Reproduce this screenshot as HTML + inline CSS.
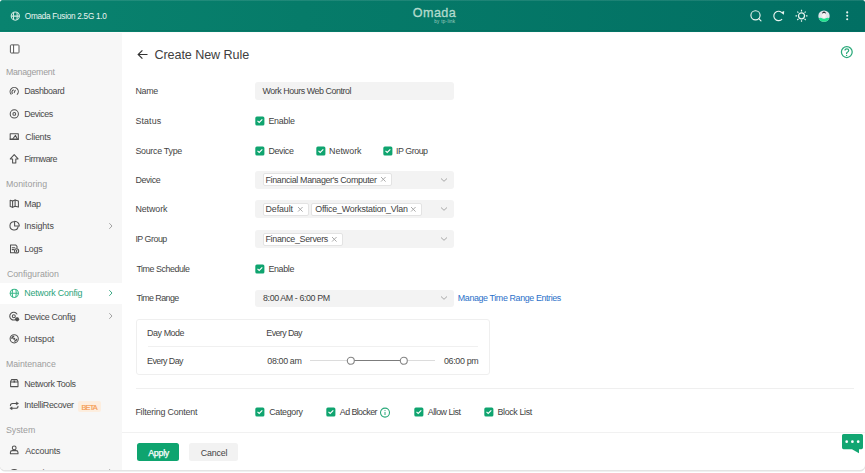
<!DOCTYPE html>
<html><head><meta charset="utf-8"><style>
html,body{margin:0;padding:0;width:865px;height:473px;overflow:hidden;background:#fff;}
body{position:relative;font-family:"Liberation Sans",sans-serif;}
.t{position:absolute;white-space:nowrap;line-height:1;}
.win{position:absolute;left:0;top:0;width:865px;height:470.3px;overflow:hidden;border-radius:2px 2px 5px 5px;box-shadow:0 1.3px 0 0.3px #e4e4e4;background:#fff}
svg{overflow:visible}
</style></head><body>
<div class="win">
<div style="position:absolute;left:0px;top:0px;width:865px;height:31.6px;background:linear-gradient(90deg,#09836f 0%,#067b69 35%,#016f63 100%);border-radius:2px 2px 0 0"></div>
<div style="position:absolute;left:0px;top:30px;width:865px;height:1px;background:rgba(0,60,50,0.12)"></div>
<div style="position:absolute;left:0px;top:0px;width:865px;height:1px;background:rgba(255,255,255,0.1)"></div>
<svg style="position:absolute;left:0px;top:0px;" width="30" height="30" viewBox="0 0 30 30"><g fill="none" stroke="#d3ebe2" stroke-width="1.05"><circle cx="15.3" cy="16.1" r="4.1"/><path d="M13.7 12.3 Q12.9 16.1 13.7 19.9 M16.9 12.3 Q17.7 16.1 16.9 19.9 M11.3 16.1 H19.3"/></g></svg>
<div class="t" style="left:24.80px;top:12.56px;font-size:8.2px;letter-spacing:-0.265px;color:#eaf5f1;">Omada Fusion 2.5G 1.0</div>
<div class="t" style="left:412.80px;top:7.23px;font-size:12.6px;letter-spacing:0.425px;color:#b3dbcd;-webkit-text-stroke:0.3px #b3dbcd">Omada</div>
<div class="t" style="left:434.30px;top:19.79px;font-size:4.5px;letter-spacing:0.311px;color:#a0d2c2;">by tp-link</div>
<svg style="position:absolute;left:748px;top:9px;" width="16" height="16" viewBox="0 0 16 16"><g fill="none" stroke="#e8f3ef" stroke-width="1.15"><circle cx="7.5" cy="6.3" r="4.6"/><line x1="10.8" y1="9.6" x2="13" y2="11.9" stroke-linecap="round"/></g></svg>
<svg style="position:absolute;left:771px;top:9px;" width="16" height="16" viewBox="0 0 16 16"><g fill="none" stroke="#e8f3ef" stroke-width="1.15"><path d="M11.1 10.02 A4.7 4.7 0 1 1 10.6 3.4"/></g><path d="M9.6 3.4 L13.2 1.9 L12.9 5.7 Z" fill="#e8f3ef"/></svg>
<svg style="position:absolute;left:794px;top:8px;" width="16" height="16" viewBox="0 0 16 16"><g fill="none" stroke="#e8f3ef" stroke-width="1.2"><circle cx="7.5" cy="7.8" r="3"/><path d="M7.5 1.8v1.6M7.5 12.2v1.6M1.5 7.8h1.6M11.9 7.8h1.6M3.3 3.6l1.1 1.1M10.6 10.9l1.1 1.1M3.3 12l1.1-1.1M10.6 4.7l1.1-1.1"/></g></svg>
<svg style="position:absolute;left:817px;top:9px;" width="14" height="14" viewBox="0 0 14 14"><defs><clipPath id="av"><circle cx="7" cy="7.1" r="5.7"/></clipPath></defs><circle cx="7" cy="7.1" r="5.7" fill="#dfe5ea"/><g clip-path="url(#av)"><path d="M0 9.6 Q3.5 8.2 5.6 9.4 Q7 10.2 8.4 9.4 Q10.5 8.2 14 9.6 V14 H0 Z" fill="#1fe08f"/><ellipse cx="7" cy="6.6" rx="1.9" ry="2.6" fill="#f8f2f2"/><path d="M5 4.8 Q5.2 2.6 7 2.6 Q8.8 2.6 9 4.8 Q8 3.9 7 4.1 Q6 3.9 5 4.8 Z" fill="#2a3236"/></g></svg>
<svg style="position:absolute;left:845px;top:10px;" width="5" height="12" viewBox="0 0 5 12"><g fill="#e8f3ef"><circle cx="2.2" cy="2.4" r="1.05"/><circle cx="2.2" cy="5.8" r="1.05"/><circle cx="2.2" cy="9.2" r="1.05"/></g></svg>
<div style="position:absolute;left:0px;top:32px;width:865px;height:1px;background:#fdfbfb"></div>
<div style="position:absolute;left:0px;top:33px;width:122px;height:437px;background:#f7f7f7"></div>
<svg style="position:absolute;left:9px;top:43px;" width="12" height="12" viewBox="0 0 12 12"><g fill="#fff" stroke="#575757" stroke-width="1"><rect x="1.4" y="1.9" width="8.6" height="8.1" rx="0.8"/><line x1="4.6" y1="1.9" x2="4.6" y2="10"/></g></svg>
<div class="t" style="left:5.90px;top:67.55px;font-size:8.8px;letter-spacing:-0.267px;color:#9d9d9d;">Management</div>
<div class="t" style="left:24.20px;top:87.47px;font-size:8.9px;letter-spacing:-0.363px;color:#4a4a4a;">Dashboard</div>
<div class="t" style="left:24.20px;top:109.77px;font-size:8.9px;letter-spacing:-0.417px;color:#4a4a4a;">Devices</div>
<div class="t" style="left:25.20px;top:132.67px;font-size:8.9px;letter-spacing:-0.217px;color:#4a4a4a;">Clients</div>
<div class="t" style="left:24.20px;top:155.37px;font-size:8.9px;letter-spacing:-0.529px;color:#4a4a4a;">Firmware</div>
<div class="t" style="left:5.90px;top:180.35px;font-size:8.8px;letter-spacing:0.022px;color:#9d9d9d;">Monitoring</div>
<div class="t" style="left:24.20px;top:199.67px;font-size:8.9px;letter-spacing:-0.200px;color:#4a4a4a;">Map</div>
<div class="t" style="left:24.20px;top:222.27px;font-size:8.9px;letter-spacing:-0.129px;color:#4a4a4a;">Insights</div>
<svg style="position:absolute;left:107px;top:221.9px;" width="7" height="8" viewBox="0 0 7 8"><path d="M2.3 1.2 L5 4 L2.3 6.8" fill="none" stroke="#9a9a9a" stroke-width="0.9"/></svg>
<div class="t" style="left:24.20px;top:245.07px;font-size:8.9px;letter-spacing:-0.267px;color:#4a4a4a;">Logs</div>
<div class="t" style="left:6.90px;top:269.55px;font-size:8.8px;letter-spacing:-0.033px;color:#9d9d9d;">Configuration</div>
<div style="position:absolute;left:0px;top:283px;width:122px;height:21px;background:#ffffff"></div>
<div class="t" style="left:24.20px;top:289.47px;font-size:8.9px;letter-spacing:-0.177px;color:#2aa37a;">Network Config</div>
<svg style="position:absolute;left:107px;top:289.1px;" width="7" height="8" viewBox="0 0 7 8"><path d="M2.3 1.2 L5 4 L2.3 6.8" fill="none" stroke="#2aa37a" stroke-width="0.9"/></svg>
<div class="t" style="left:24.20px;top:312.57px;font-size:8.9px;letter-spacing:-0.308px;color:#4a4a4a;">Device Config</div>
<svg style="position:absolute;left:107px;top:312.2px;" width="7" height="8" viewBox="0 0 7 8"><path d="M2.3 1.2 L5 4 L2.3 6.8" fill="none" stroke="#9a9a9a" stroke-width="0.9"/></svg>
<div class="t" style="left:24.20px;top:335.37px;font-size:8.9px;letter-spacing:-0.083px;color:#4a4a4a;">Hotspot</div>
<div class="t" style="left:5.90px;top:359.65px;font-size:8.8px;letter-spacing:-0.040px;color:#9d9d9d;">Maintenance</div>
<div class="t" style="left:24.20px;top:379.57px;font-size:8.9px;letter-spacing:-0.308px;color:#4a4a4a;">Network Tools</div>
<div class="t" style="left:24.20px;top:401.37px;font-size:8.9px;letter-spacing:-0.300px;color:#4a4a4a;">IntelliRecover</div>
<div style="position:absolute;left:78px;top:401px;width:23px;height:11px;background:#fdeedf;border-radius:2px"></div>
<div class="t" style="left:81.50px;top:403.52px;font-size:7.3px;letter-spacing:-0.767px;color:#f59a4e;-webkit-text-stroke:0.2px #f59a4e">BETA</div>
<div class="t" style="left:5.90px;top:426.35px;font-size:8.8px;letter-spacing:0.000px;color:#9d9d9d;">System</div>
<div class="t" style="left:25.20px;top:447.07px;font-size:8.9px;letter-spacing:-0.171px;color:#4a4a4a;">Accounts</div>
<div class="t" style="left:24.20px;top:468.67px;font-size:8.9px;letter-spacing:0.614px;color:#4a4a4a;">Settings</div>
<svg style="position:absolute;left:107px;top:468.3px;" width="7" height="8" viewBox="0 0 7 8"><path d="M2.3 1.2 L5 4 L2.3 6.8" fill="none" stroke="#9a9a9a" stroke-width="0.9"/></svg>
<svg style="position:absolute;left:0px;top:0px;" width="30" height="473" viewBox="0 0 30 473">
<g fill="none" stroke="#505050" stroke-width="1.05" stroke-linecap="round" stroke-linejoin="round">
<path d="M11.1 94.2 A4.1 4.1 0 1 1 17.2 94.3"/>
<path d="M12.4 93.4 A2.3 2.3 0 0 1 13.3 89.9"/>
<path d="M14.2 92.6 L15.2 90.2"/>
<circle cx="14.3" cy="113.9" r="4.1"/>
<circle cx="14.3" cy="113.9" r="1.4"/>
<path d="M10.2 138.9 V133.7 H18.3 V138.9"/>
<path d="M10.2 139.2 H18.3" stroke-width="1.4"/>
<path d="M12.9 138.8 L15.5 135.4 L17.2 138.8"/>
<path d="M14.2 154.6 L18.1 158.9 H15.8 V163 H12.6 V158.9 H10.3 Z"/>
<path d="M10.2 200.2 L12.6 201.1 L15.1 200 L18.4 200.9 V207.1 L15.1 206.2 L12.6 207.2 L10.2 206.4 Z"/>
<path d="M12.6 201.1 V207.2 M15.1 200 V206.2"/>
<path d="M13.9 221.8 A4.1 4.1 0 1 0 18.1 226.6"/>
<path d="M14.6 221.2 V226 H19.3 A4.7 4.7 0 0 0 14.6 221.2 Z"/>
<path d="M14.6 252.8 H10.5 V244.9 H15.6 L17 246.3 V248"/>
<path d="M12.2 247.8 H14.8 M12.2 249.6 H13.6"/>
<circle cx="16.6" cy="250.9" r="2.1"/>
<path d="M16.6 250.2 V252"/>
<circle cx="14.3" cy="293.3" r="4.1" stroke="#3ab88a"/>
<path d="M12.6 289.6 Q11.8 293.3 12.6 297 M15.9 289.6 Q16.7 293.3 15.9 297 M10.3 293.3 H18.3" stroke="#3ab88a"/>
<path d="M17.1 318 A3.9 3.9 0 1 1 16.9 314"/>
<circle cx="13.8" cy="316.2" r="1.5"/>
<circle cx="14.2" cy="338.8" r="4.1"/>
<path d="M11.9 338.2 A2.4 2.4 0 0 1 13.6 336.5" stroke-width="1.5"/>
<path d="M16.5 339.4 A2.4 2.4 0 0 1 14.8 341.1" stroke-width="1.5"/>
<path d="M10.6 383.6 V381.6 L11.6 379.6 H16.9 L18 381.6 V386.6 H10.6 Z M10.6 381.9 H18"/>
<path d="M10.4 405.6 Q10.4 403.4 12.6 403.4 H17.4"/>
<path d="M18 406.2 Q18 408.3 15.8 408.3 H11"/>
<circle cx="14.2" cy="447.9" r="1.9"/>
<path d="M10.4 453.8 V452.4 Q10.4 450.6 12.4 450.6 H16 Q18 450.6 18 452.4 V453.8 Z"/>
<path d="M10.2 472.6 A4.1 4.1 0 0 1 18.2 472.6"/>
</g>
<circle cx="17.1" cy="319.3" r="2.1" fill="#505050"/>
<circle cx="14.2" cy="338.8" r="1.1" fill="#505050"/>
<path d="M13.5 380.4 H15.1 V382.6 H13.5 Z" fill="#505050"/>
<path d="M16.3 401.9 L18.6 403.4 L16.3 404.9 Z M12.1 406.8 L9.8 408.3 L12.1 409.8 Z" fill="#505050" stroke="#505050" stroke-width="0.5" stroke-linejoin="round"/>
</svg>
<svg style="position:absolute;left:136px;top:48px;" width="14" height="13" viewBox="0 0 14 13"><g fill="none" stroke="#333" stroke-width="1.2"><path d="M11.5 6.5 H2.4 M6.4 2.4 L2.2 6.5 L6.4 10.6"/></g></svg>
<div class="t" style="left:154.50px;top:49.33px;font-size:12.6px;letter-spacing:-0.086px;color:#404040;">Create New Rule</div>
<svg style="position:absolute;left:839px;top:45px;" width="16" height="16" viewBox="0 0 16 16"><g fill="none" stroke="#2aa97a" stroke-width="1.25"><circle cx="7.8" cy="7.1" r="5.4"/><path d="M6 5.6 Q6 3.8 7.9 3.8 Q9.7 3.8 9.7 5.5 Q9.7 6.6 8.3 7.3 Q7.6 7.7 7.6 8.6 V9"/></g><circle cx="7.6" cy="10.4" r="0.7" fill="#2aa97a"/></svg>
<div class="t" style="left:135.40px;top:87.17px;font-size:8.9px;letter-spacing:-0.267px;color:#454545;">Name</div>
<div style="position:absolute;left:255px;top:82px;width:199px;height:18px;background:#f3f3f3;border-radius:3px"></div>
<div class="t" style="left:262.60px;top:87.37px;font-size:8.9px;letter-spacing:-0.448px;color:#424242;">Work Hours Web Control</div>
<div class="t" style="left:135.40px;top:116.67px;font-size:8.9px;letter-spacing:0.120px;color:#454545;">Status</div>
<svg style="position:absolute;left:255px;top:116px;" width="10" height="10" viewBox="0 0 10 10"><rect x="0.3" y="0.4" width="9.1" height="9" rx="1.5" fill="#0fa46f"/><path d="M2.5 4.9 L4.2 6.5 L7.3 3.3" fill="none" stroke="#fff" stroke-width="1.15"/></svg>
<div class="t" style="left:268.40px;top:116.67px;font-size:8.9px;letter-spacing:-0.240px;color:#424242;">Enable</div>
<div class="t" style="left:135.40px;top:146.57px;font-size:8.9px;letter-spacing:-0.280px;color:#454545;">Source Type</div>
<svg style="position:absolute;left:255px;top:146px;" width="10" height="10" viewBox="0 0 10 10"><rect x="0.3" y="0.4" width="9.1" height="9" rx="1.5" fill="#0fa46f"/><path d="M2.5 4.9 L4.2 6.5 L7.3 3.3" fill="none" stroke="#fff" stroke-width="1.15"/></svg>
<div class="t" style="left:268.40px;top:146.57px;font-size:8.9px;letter-spacing:-0.340px;color:#424242;">Device</div>
<svg style="position:absolute;left:316px;top:146px;" width="10" height="10" viewBox="0 0 10 10"><rect x="0.3" y="0.4" width="9.1" height="9" rx="1.5" fill="#0fa46f"/><path d="M2.5 4.9 L4.2 6.5 L7.3 3.3" fill="none" stroke="#fff" stroke-width="1.15"/></svg>
<div class="t" style="left:329.10px;top:146.57px;font-size:8.9px;letter-spacing:-0.017px;color:#424242;">Network</div>
<svg style="position:absolute;left:383px;top:146px;" width="10" height="10" viewBox="0 0 10 10"><rect x="0.3" y="0.4" width="9.1" height="9" rx="1.5" fill="#0fa46f"/><path d="M2.5 4.9 L4.2 6.5 L7.3 3.3" fill="none" stroke="#fff" stroke-width="1.15"/></svg>
<div class="t" style="left:395.90px;top:146.57px;font-size:8.9px;letter-spacing:-0.457px;color:#424242;">IP Group</div>
<div class="t" style="left:135.40px;top:176.07px;font-size:8.9px;letter-spacing:-0.360px;color:#454545;">Device</div>
<div style="position:absolute;left:255px;top:171px;width:199px;height:18px;background:#f3f3f3;border-radius:3px"></div>
<div style="position:absolute;left:262.6px;top:173.2px;width:129px;height:13px;background:#fff;border:1px solid #e3e3e3;border-radius:2px;box-sizing:border-box"></div>
<div class="t" style="left:265.50px;top:175.67px;font-size:8.9px;letter-spacing:-0.341px;color:#424242;">Financial Manager's Computer</div>
<svg style="position:absolute;left:379.6px;top:176.39999999999998px;" width="7" height="7" viewBox="0 0 7 7"><path d="M1 1 L5.6 5.6 M5.6 1 L1 5.6" stroke="#a0a0a0" stroke-width="0.9"/></svg>
<svg style="position:absolute;left:440px;top:176.9px;" width="8" height="6" viewBox="0 0 8 6"><path d="M1 1.5 L4 4.3 L7 1.5" fill="none" stroke="#9e9e9e" stroke-width="0.9"/></svg>
<div class="t" style="left:135.40px;top:205.47px;font-size:8.9px;letter-spacing:-0.083px;color:#454545;">Network</div>
<div style="position:absolute;left:255px;top:200px;width:199px;height:18px;background:#f3f3f3;border-radius:3px"></div>
<div style="position:absolute;left:262.6px;top:202.8px;width:46px;height:13px;background:#fff;border:1px solid #e3e3e3;border-radius:2px;box-sizing:border-box"></div>
<div class="t" style="left:265.50px;top:205.27px;font-size:8.9px;letter-spacing:-0.100px;color:#424242;">Default</div>
<svg style="position:absolute;left:296.6px;top:206.0px;" width="7" height="7" viewBox="0 0 7 7"><path d="M1 1 L5.6 5.6 M5.6 1 L1 5.6" stroke="#a0a0a0" stroke-width="0.9"/></svg>
<div style="position:absolute;left:311.4px;top:202.8px;width:111px;height:13px;background:#fff;border:1px solid #e3e3e3;border-radius:2px;box-sizing:border-box"></div>
<div class="t" style="left:315.30px;top:205.27px;font-size:8.9px;letter-spacing:-0.214px;color:#424242;">Office_Workstation_Vlan</div>
<svg style="position:absolute;left:410.4px;top:206.0px;" width="7" height="7" viewBox="0 0 7 7"><path d="M1 1 L5.6 5.6 M5.6 1 L1 5.6" stroke="#a0a0a0" stroke-width="0.9"/></svg>
<svg style="position:absolute;left:440px;top:206.2px;" width="8" height="6" viewBox="0 0 8 6"><path d="M1 1.5 L4 4.3 L7 1.5" fill="none" stroke="#9e9e9e" stroke-width="0.9"/></svg>
<div class="t" style="left:135.40px;top:234.77px;font-size:8.9px;letter-spacing:-0.500px;color:#454545;">IP Group</div>
<div style="position:absolute;left:255px;top:230px;width:199px;height:17.5px;background:#f3f3f3;border-radius:3px"></div>
<div style="position:absolute;left:262.6px;top:232.6px;width:80px;height:13px;background:#fff;border:1px solid #e3e3e3;border-radius:2px;box-sizing:border-box"></div>
<div class="t" style="left:265.50px;top:235.07px;font-size:8.9px;letter-spacing:-0.307px;color:#424242;">Finance_Servers</div>
<svg style="position:absolute;left:330.6px;top:235.79999999999998px;" width="7" height="7" viewBox="0 0 7 7"><path d="M1 1 L5.6 5.6 M5.6 1 L1 5.6" stroke="#a0a0a0" stroke-width="0.9"/></svg>
<svg style="position:absolute;left:440px;top:235.8px;" width="8" height="6" viewBox="0 0 8 6"><path d="M1 1.5 L4 4.3 L7 1.5" fill="none" stroke="#9e9e9e" stroke-width="0.9"/></svg>
<div class="t" style="left:136.40px;top:264.57px;font-size:8.9px;letter-spacing:-0.442px;color:#454545;">Time Schedule</div>
<svg style="position:absolute;left:255px;top:264px;" width="10" height="10" viewBox="0 0 10 10"><rect x="0.3" y="0.4" width="9.1" height="9" rx="1.5" fill="#0fa46f"/><path d="M2.5 4.9 L4.2 6.5 L7.3 3.3" fill="none" stroke="#fff" stroke-width="1.15"/></svg>
<div class="t" style="left:268.40px;top:264.67px;font-size:8.9px;letter-spacing:-0.340px;color:#424242;">Enable</div>
<div class="t" style="left:136.40px;top:294.07px;font-size:8.9px;letter-spacing:-0.578px;color:#454545;">Time Range</div>
<div style="position:absolute;left:255px;top:289.5px;width:199px;height:17.5px;background:#f3f3f3;border-radius:3px"></div>
<div class="t" style="left:263.10px;top:293.77px;font-size:8.9px;letter-spacing:-0.406px;color:#424242;">8:00 AM - 6:00 PM</div>
<svg style="position:absolute;left:440px;top:295.1px;" width="8" height="6" viewBox="0 0 8 6"><path d="M1 1.5 L4 4.3 L7 1.5" fill="none" stroke="#9e9e9e" stroke-width="0.9"/></svg>
<div class="t" style="left:457.80px;top:294.07px;font-size:8.9px;letter-spacing:-0.375px;color:#2a70c9;">Manage Time Range Entries</div>
<div style="position:absolute;left:135.5px;top:318.6px;width:354px;height:56px;border:1px solid #efefef;border-radius:3px;box-sizing:border-box"></div>
<div class="t" style="left:147.10px;top:329.47px;font-size:8.9px;letter-spacing:-0.429px;color:#444;">Day Mode</div>
<div class="t" style="left:266.30px;top:329.47px;font-size:8.9px;letter-spacing:-0.587px;color:#444;">Every Day</div>
<div style="position:absolute;left:147.6px;top:346.2px;width:330px;height:1px;background:#f0f0f0"></div>
<div class="t" style="left:147.10px;top:357.07px;font-size:8.9px;letter-spacing:-0.575px;color:#444;">Every Day</div>
<div class="t" style="left:267.30px;top:357.07px;font-size:8.9px;letter-spacing:-0.357px;color:#444;">08:00 am</div>
<div class="t" style="left:443.90px;top:357.17px;font-size:8.9px;letter-spacing:-0.314px;color:#444;">06:00 pm</div>
<div style="position:absolute;left:310.3px;top:360px;width:124.6px;height:1px;background:#dcdcdc"></div>
<div style="position:absolute;left:351px;top:359.8px;width:52.4px;height:1.4px;background:#7c7c7c"></div>
<svg style="position:absolute;left:346.2px;top:356px;" width="10" height="10" viewBox="0 0 10 10"><circle cx="4.8" cy="4.8" r="3.5" fill="#fff" stroke="#858585" stroke-width="1.1"/></svg>
<svg style="position:absolute;left:398.6px;top:356px;" width="10" height="10" viewBox="0 0 10 10"><circle cx="4.8" cy="4.8" r="3.5" fill="#fff" stroke="#858585" stroke-width="1.1"/></svg>
<div style="position:absolute;left:135.5px;top:387.6px;width:718px;height:1.2px;background:#efefef"></div>
<div class="t" style="left:135.40px;top:408.27px;font-size:8.9px;letter-spacing:-0.194px;color:#454545;">Filtering Content</div>
<svg style="position:absolute;left:255px;top:407px;" width="10" height="10" viewBox="0 0 10 10"><rect x="0.3" y="0.4" width="9.1" height="9" rx="1.5" fill="#0fa46f"/><path d="M2.5 4.9 L4.2 6.5 L7.3 3.3" fill="none" stroke="#fff" stroke-width="1.15"/></svg>
<div class="t" style="left:269.20px;top:408.27px;font-size:8.9px;letter-spacing:-0.314px;color:#424242;">Category</div>
<svg style="position:absolute;left:325.6px;top:407px;" width="10" height="10" viewBox="0 0 10 10"><rect x="0.3" y="0.4" width="9.1" height="9" rx="1.5" fill="#0fa46f"/><path d="M2.5 4.9 L4.2 6.5 L7.3 3.3" fill="none" stroke="#fff" stroke-width="1.15"/></svg>
<div class="t" style="left:339.80px;top:408.27px;font-size:8.9px;letter-spacing:-0.578px;color:#424242;">Ad Blocker</div>
<svg style="position:absolute;left:379px;top:407px;" width="12" height="12" viewBox="0 0 12 12"><circle cx="6" cy="5.6" r="4.5" fill="none" stroke="#2aa97a" stroke-width="1.05"/><path d="M6 4.9 V8" stroke="#2aa97a" stroke-width="1"/><circle cx="6" cy="3.5" r="0.6" fill="#2aa97a"/></svg>
<svg style="position:absolute;left:413.5px;top:407px;" width="10" height="10" viewBox="0 0 10 10"><rect x="0.3" y="0.4" width="9.1" height="9" rx="1.5" fill="#0fa46f"/><path d="M2.5 4.9 L4.2 6.5 L7.3 3.3" fill="none" stroke="#fff" stroke-width="1.15"/></svg>
<div class="t" style="left:427.70px;top:408.27px;font-size:8.9px;letter-spacing:-0.467px;color:#424242;">Allow List</div>
<svg style="position:absolute;left:484.4px;top:407px;" width="10" height="10" viewBox="0 0 10 10"><rect x="0.3" y="0.4" width="9.1" height="9" rx="1.5" fill="#0fa46f"/><path d="M2.5 4.9 L4.2 6.5 L7.3 3.3" fill="none" stroke="#fff" stroke-width="1.15"/></svg>
<div class="t" style="left:497.50px;top:408.27px;font-size:8.9px;letter-spacing:-0.356px;color:#424242;">Block List</div>
<div style="position:absolute;left:122px;top:432px;width:743px;height:1.2px;background:#f1f1f1"></div>
<div style="position:absolute;left:136.6px;top:443px;width:42.8px;height:18px;background:#0ea46f;border-radius:2.5px"></div>
<div class="t" style="left:148.20px;top:448.57px;font-size:8.9px;letter-spacing:-0.275px;color:#fff;-webkit-text-stroke:0.25px #fff">Apply</div>
<div style="position:absolute;left:189px;top:443px;width:48.7px;height:18px;background:#f2f2f2;border-radius:2.5px"></div>
<div class="t" style="left:200.70px;top:448.57px;font-size:8.9px;letter-spacing:-0.180px;color:#444;">Cancel</div>
<svg style="position:absolute;left:841px;top:433px;" width="23" height="21" viewBox="0 0 23 21"><path d="M2.6 1 H20.4 Q22 1 22 2.6 V14.6 Q22 16.2 20.4 16.2 H18 V20.2 L11 16.2 H2.6 Q1 16.2 1 14.6 V2.6 Q1 1 2.6 1 Z" fill="#12a672"/><g fill="#fff"><circle cx="5.7" cy="8.7" r="1.35"/><circle cx="11.4" cy="8.7" r="1.35"/><circle cx="17.2" cy="8.7" r="1.35"/></g></svg>
</div>
</body></html>
